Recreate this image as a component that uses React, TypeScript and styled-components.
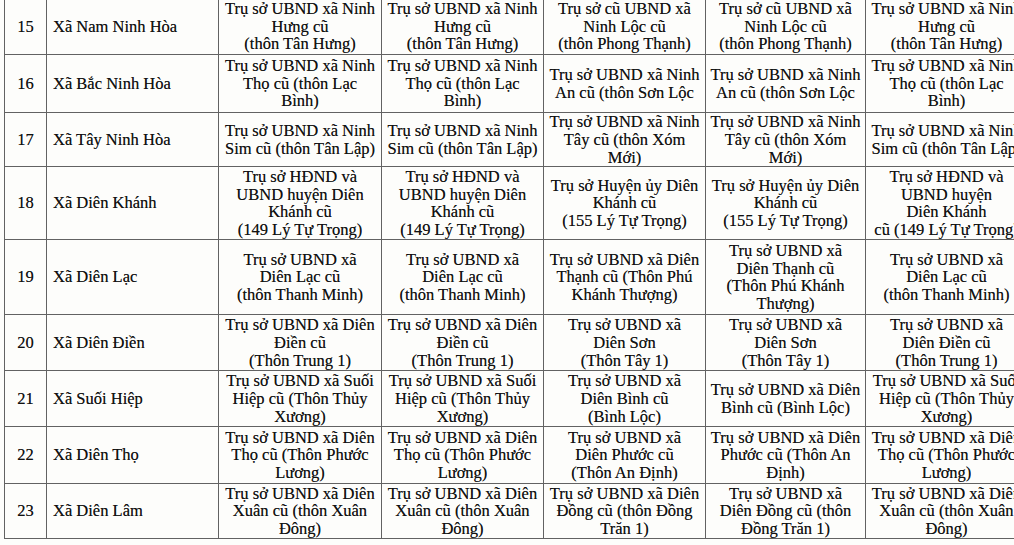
import styled, { createGlobalStyle } from "styled-components";

const GlobalStyle = createGlobalStyle`
    html, body {
        margin: 0;
        padding: 0;
        background: #fdfdfb;
        font-family: "Liberation Serif", "Times New Roman", "DejaVu Serif", serif;
    }
`;

type Row = {
    no: number;
    name: string;
    h: number;
    cells: string[][];
};

const ninhHung = ["Trụ sở UBND xã Ninh", "Hưng cũ", "(thôn Tân Hưng)"];
const ninhLoc = ["Trụ sở cũ UBND xã", "Ninh Lộc cũ", "(thôn Phong Thạnh)"];
const ninhTho = ["Trụ sở UBND xã Ninh", "Thọ cũ (thôn Lạc", "Bình)"];
const ninhAn = ["Trụ sở UBND xã Ninh", "An cũ (thôn Sơn Lộc"];
const ninhSim = ["Trụ sở UBND xã Ninh", "Sim cũ (thôn Tân Lập)"];
const ninhTay = ["Trụ sở UBND xã Ninh", "Tây cũ (thôn Xóm", "Mới)"];
const hdnd = ["Trụ sở HĐND và", "UBND huyện Diên", "Khánh cũ", "(149 Lý Tự Trọng)"];
const huyenUy = ["Trụ sở Huyện ủy Diên", "Khánh cũ", "(155 Lý Tự Trọng)"];
const dienLac = ["Trụ sở UBND xã", "Diên Lạc cũ", "(thôn Thanh Minh)"];
const dienDien = ["Trụ sở UBND xã Diên", "Điền cũ", "(Thôn Trung 1)"];
const dienSon = ["Trụ sở UBND xã", "Diên Sơn", "(Thôn Tây 1)"];
const suoiHiep = ["Trụ sở UBND xã Suối", "Hiệp cũ (Thôn Thủy", "Xương)"];
const dienTho = ["Trụ sở UBND xã Diên", "Thọ cũ (Thôn Phước", "Lương)"];
const dienXuan = ["Trụ sở UBND xã Diên", "Xuân cũ (thôn Xuân", "Đông)"];

const rows: Row[] = [
    { no: 15, name: "Xã Nam Ninh Hòa", h: 56, cells: [ninhHung, ninhHung, ninhLoc, ninhLoc, ninhHung] },
    { no: 16, name: "Xã Bắc Ninh Hòa", h: 58, cells: [ninhTho, ninhTho, ninhAn, ninhAn, ninhTho] },
    { no: 17, name: "Xã Tây Ninh Hòa", h: 54, cells: [ninhSim, ninhSim, ninhTay, ninhTay, ninhSim] },
    {
        no: 18, name: "Xã Diên Khánh", h: 73,
        cells: [hdnd, hdnd, huyenUy, huyenUy, ["Trụ sở HĐND và", "UBND huyện", "Diên Khánh", "cũ (149 Lý Tự Trọng)"]],
    },
    {
        no: 19, name: "Xã Diên Lạc", h: 75,
        cells: [
            dienLac,
            dienLac,
            ["Trụ sở UBND xã Diên", "Thạnh cũ (Thôn Phú", "Khánh Thượng)"],
            ["Trụ sở UBND xã", "Diên Thạnh cũ", "(Thôn Phú Khánh", "Thượng)"],
            dienLac,
        ],
    },
    {
        no: 20, name: "Xã Diên Điền", h: 56,
        cells: [dienDien, dienDien, dienSon, dienSon, ["Trụ sở UBND xã", "Diên Điền cũ", "(Thôn Trung 1)"]],
    },
    {
        no: 21, name: "Xã Suối Hiệp", h: 56,
        cells: [
            suoiHiep,
            suoiHiep,
            ["Trụ sở UBND xã", "Diên Bình cũ", "(Bình Lộc)"],
            ["Trụ sở UBND xã Diên", "Bình cũ (Bình Lộc)"],
            suoiHiep,
        ],
    },
    {
        no: 22, name: "Xã Diên Thọ", h: 57,
        cells: [
            dienTho,
            dienTho,
            ["Trụ sở UBND xã", "Diên Phước cũ", "(Thôn An Định)"],
            ["Trụ sở UBND xã Diên", "Phước cũ (Thôn An", "Định)"],
            dienTho,
        ],
    },
    {
        no: 23, name: "Xã Diên Lâm", h: 55,
        cells: [
            dienXuan,
            dienXuan,
            ["Trụ sở UBND xã Diên", "Đồng cũ (thôn Đồng", "Trăn 1)"],
            ["Trụ sở UBND xã", "Diên Đồng cũ (thôn", "Đồng Trăn 1)"],
            dienXuan,
        ],
    },
];

const colWidths = [42, 172, 163, 162, 162, 160, 162];
const tableWidth = colWidths.reduce((a, b) => a + b, 0);

export default function App() {
    return (
        <>
            <GlobalStyle />
            <Page>
                <Table style={{ width: tableWidth }}>
                    <colgroup>
                        {colWidths.map((w, i) => (
                            <col key={i} style={{ width: w }} />
                        ))}
                    </colgroup>
                    <tbody>
                        {rows.map((row) => (
                            <tr key={row.no} style={{ height: row.h }}>
                                <NoCell>{row.no}</NoCell>
                                <NameCell>{row.name}</NameCell>
                                {row.cells.map((lines, i) => (
                                    <PlaceCell key={i}>
                                        {lines.map((l, j) => (
                                            <Line key={j}>{l}</Line>
                                        ))}
                                    </PlaceCell>
                                ))}
                            </tr>
                        ))}
                    </tbody>
                </Table>
            </Page>
        </>
    );
}

const Page = styled.div`
    width: 1014px;
    height: 545px;
    overflow: hidden;
    padding-left: 4px;
    box-sizing: border-box;
`;

const Table = styled.table`
    border-collapse: collapse;
    table-layout: fixed;
    margin-top: -2px;
    font-family: "Liberation Serif", "Times New Roman", "DejaVu Serif", serif;
    font-size: 16.5px;
    line-height: 17.8px;
    color: #111;

    td {
        font-family: "Liberation Serif", "Times New Roman", "DejaVu Serif", serif;
        border: 1.5px solid #626262;
        padding: 0;
        vertical-align: middle;
        overflow: hidden;
        text-shadow: 0 0 0.6px rgba(0, 0, 0, 0.55);
    }
`;

const NoCell = styled.td`
    text-align: center;
`;

const NameCell = styled.td`
    text-align: left;
    padding-left: 6px !important;
    white-space: nowrap;
`;

const PlaceCell = styled.td`
    text-align: center;
`;

const Line = styled.div`
    white-space: nowrap;
`;
